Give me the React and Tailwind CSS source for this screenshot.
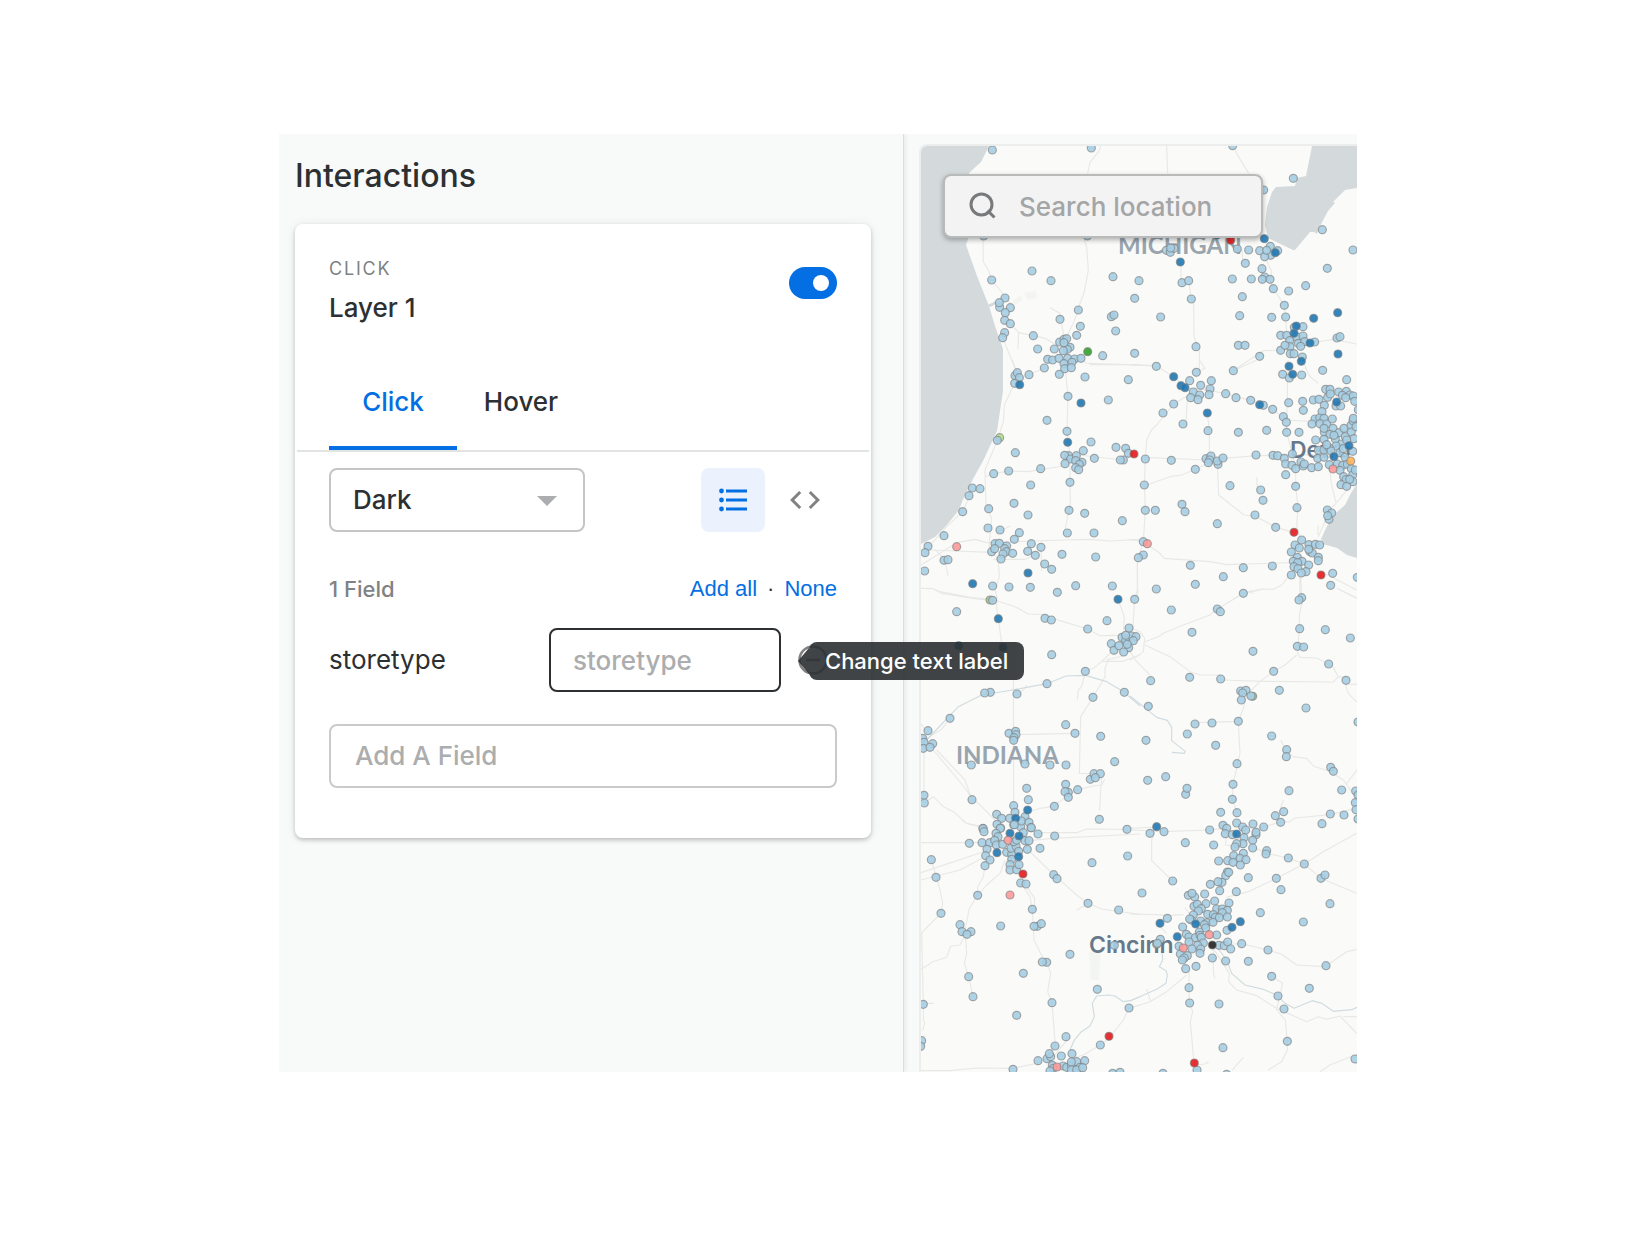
import React from "react";

const WATER = "#d4dadc";

// Store positions per map tile, in thirds of a pixel from the tile's corner.
const TILES = [
  {
    x: -11, y: -16,
    light: [[247,60],[544,54],[221,318],[532,318],[366,423],[423,452],[245,450],[609,440],[687,452],[285,504],[269,532],[268,518],[301,533],[286,548],[284,571],[301,581],[284,608],[278,623],[370,617],[450,568],[505,540],[511,589],[500,616],[604,560],[612,555],[617,603],[674,505],[383,657],[433,657],[449,636],[462,628],[470,626],[480,652],[472,658],[462,638],[460,662],[413,688],[428,690],[447,685],[473,685],[494,687],[513,685],[462,701],[486,697],[403,714],[464,716],[484,713],[578,677],[674,670]],
    green: [[533,665]],
  },
  {
    x: 209, y: -16,
    light: [[308,47],[490,145],[401,180],[577,299],[669,360],[592,415],[109,361],[121,367],[132,355],[122,354],[322,357],[356,360],[389,362],[421,349],[443,362],[422,376],[404,380],[410,361],[346,400],[396,416],[307,447],[364,447],[404,441],[397,448],[420,448],[156,458],[176,452],[430,476],[476,483],[527,467],[184,507],[337,500],[463,526],[329,557],[425,562],[467,561],[92,561],[493,592],[519,590],[452,616],[470,616],[479,632],[500,620],[519,618],[480,650],[505,640],[524,635],[554,636],[452,661],[465,646],[512,649],[481,671],[492,671],[517,681],[621,624],[630,620],[325,646],[345,646],[198,650],[389,679],[79,709]],
    blue: [[261,315],[151,396],[403,326],[436,368],[499,588],[492,610],[540,639],[551,565],[623,548],[624,672],[514,694],[477,709]],
    red: [[302,331]],
  },
  {
    x: -11, y: 214,
    light: [[315,47],[322,38],[328,53],[314,70],[357,44],[448,43],[525,51],[655,59],[474,109],[595,120],[411,181],[471,214],[316,278],[543,246],[618,262],[647,265],[655,280],[640,300],[631,300],[520,272],[476,287],[464,286],[482,297],[499,287],[516,307],[497,302],[508,313],[497,323],[506,329],[465,311],[553,295],[296,333],[251,341],[392,326],[362,375],[480,367],[187,384],[210,386],[177,407],[158,455],[312,430],[236,446],[354,465],[477,451],[524,460],[637,482],[234,504],[270,510],[328,518],[313,538],[102,527],[472,519],[552,519],[54,559],[45,578],[102,601],[114,599],[44,633],[255,551],[268,550],[290,558],[284,566],[245,575],[254,566],[289,575],[279,582],[273,597],[308,580],[364,551],[393,562],[353,574],[376,586],[404,612],[425,628],[456,583],[557,591],[248,678],[297,681],[361,682],[442,697],[497,677],[607,678]],
    lime: [[269,233]],
    over: [[262,241]],
    blue: [[329,74],[513,129],[473,247],[354,639],[188,671]],
    red: [[672,282]],
    pink: [[140,560]],
  },
  {
    x: 209, y: 214,
    light: [[199,37],[310,32],[179,62],[212,76],[244,62],[240,87],[237,104],[190,96],[209,105],[182,113],[204,119],[131,132],[99,159],[159,192],[287,101],[318,113],[362,121],[400,136],[428,148],[460,170],[469,187],[470,217],[507,217],[476,128],[518,124],[520,151],[458,43],[478,54],[515,45],[578,31],[650,59],[234,212],[325,217],[410,211],[46,297],[124,301],[196,328],[228,296],[243,288],[239,300],[235,308],[264,313],[262,303],[279,294],[378,285],[429,286],[443,287],[463,295],[487,282],[467,312],[486,316],[497,326],[513,306],[520,318],[523,312],[545,323],[565,320],[467,344],[497,379],[501,443],[550,120],[567,118],[583,136],[587,88],[600,88],[593,112],[601,102],[626,96],[649,94],[637,106],[660,105],[670,108],[647,113],[674,124],[618,138],[632,138],[576,155],[555,177],[569,174],[582,175],[546,192],[570,191],[590,192],[607,177],[609,205],[583,217],[600,223],[557,240],[582,238],[616,237],[627,218],[642,205],[646,230],[635,252],[663,196],[669,182],[670,175],[664,216],[672,236],[650,240],[668,274],[618,258],[630,278],[582,205],[612,226],[678,200],[565,271],[563,295],[582,292],[582,270],[598,264],[603,273],[590,254],[640,266],[645,292],[598,314],[622,312],[638,316],[630,331],[652,313],[664,326],[668,345],[676,330],[641,350],[648,359],[669,365],[633,374],[650,379],[659,358],[685,149],[592,450],[605,459],[597,478],[593,467],[43,375],[300,377],[392,390],[399,421],[156,433],[165,455],[46,451],[76,451],[375,465],[262,491],[437,502],[40,545],[40,585],[25,593],[181,616],[340,623],[427,618],[280,650],[196,673],[79,687],[608,640],[602,676],[682,652],[515,540],[495,555],[508,564],[484,576],[537,554],[556,553],[569,555],[540,575],[547,579],[536,568],[565,592],[565,602],[502,592],[490,604],[516,604],[503,608],[492,620],[504,626],[536,615],[528,635],[514,639],[484,645],[515,713],[507,720]],
    blue: [[131,50],[153,77],[165,83],[232,159],[389,134],[488,43],[620,126],[657,257],[612,290]],
    orange: [[662,303]],
    pink: [[609,327],[52,551]],
    red: [[492,517],[573,645]],
  },
  {
    x: -11, y: 444,
    light: [[140,65],[405,85],[424,90],[533,117],[591,92],[657,114],[636,142],[647,152],[665,138],[678,140],[670,152],[656,173],[647,136],[604,161],[612,181],[627,167],[641,186],[652,163],[425,194],[526,244],[411,281],[643,307],[549,322],[241,307],[224,309],[321,312],[120,385],[467,404],[495,430],[54,422],[38,445],[42,457],[68,461],[40,475],[60,472],[297,430],[317,424],[318,434],[312,443],[311,451],[572,439],[614,515],[184,525],[345,522],[420,525],[468,525],[350,595],[355,629],[186,629],[311,647],[315,667],[467,583],[475,607],[465,605],[475,622],[503,599],[433,649],[541,568],[552,551],[571,551],[556,563],[42,616],[43,639],[260,673],[275,685],[299,685],[261,703],[272,714],[311,704],[332,710],[345,680],[334,693],[357,697],[363,713],[219,715],[568,688]],
    olive: [[240,30]],
    over: [[248,31]],
    blue: [[624,28],[265,86],[146,167],[279,172],[353,660],[317,685]],
  },
  {
    x: 209, y: 444,
    light: [[14,28],[124,60],[262,57],[271,65],[340,10],[186,127],[369,184],[431,244],[509,116],[502,169],[521,171],[586,119],[661,144],[596,222],[648,271],[62,272],[179,262],[272,267],[332,303],[348,301],[338,309],[334,330],[448,301],[528,354],[55,349],[195,402],[246,399],[325,394],[172,432],[257,466],[425,438],[470,479],[469,500],[48,451],[321,521],[53,571],[107,560],[309,583],[167,613],[171,595],[307,628],[272,667],[321,668],[477,602],[602,532],[610,544],[635,600],[677,603],[684,615],[676,638],[678,659],[642,675],[601,672],[684,687],[436,677],[461,665],[452,697],[576,701],[320,699],[369,702],[401,711],[279,706],[290,715],[338,711],[684,396]],
    olive: [[368,319]],
    over: [[363,318]],
  },
  {
    x: -11, y: 674,
    light: [[219,26],[222,35],[271,25],[258,40],[264,50],[178,70],[216,68],[239,68],[254,61],[259,75],[231,88],[278,73],[227,107],[240,120],[225,137],[290,97],[305,103],[303,85],[318,79],[312,65],[320,60],[340,38],[345,62],[357,62],[352,88],[326,94],[390,85],[384,42],[305,118],[300,134],[300,150],[320,149],[327,134],[313,14],[364,23],[434,48],[651,28],[546,128],[653,108],[64,119],[78,172],[203,226],[93,280],[332,189],[348,192],[431,164],[441,176],[367,268],[534,250],[626,270],[150,314],[156,335],[183,335],[171,343],[272,318],[382,319],[394,311],[372,319],[480,403],[410,427],[397,426],[340,460],[176,470],[189,530],[426,548],[562,508],[613,376],[40,553],[35,662],[32,679],[320,586],[657,564],[468,650],[435,678],[571,675],[384,722],[411,716],[422,710],[418,701],[454,708],[486,701],[427,736],[430,745],[459,738],[470,742],[484,735],[500,725],[524,722],[510,742],[484,726],[484,750],[500,750],[518,743],[420,753],[309,748],[608,760],[630,757]],
    blue: [[300,40],[327,48],[261,98],[326,110]],
    pink: [[294,61],[300,225],[441,741]],
    red: [[339,162],[597,649]],
  },
  {
    x: 209, y: 674,
    light: [[60,40],[102,35],[166,68],[239,30],[251,75],[286,41],[307,44],[347,30],[378,44],[378,37],[342,53],[368,61],[339,71],[320,71],[315,81],[368,84],[340,100],[311,107],[330,115],[348,119],[331,135],[293,122],[309,127],[266,123],[410,92],[408,102],[475,114],[523,132],[573,175],[585,165],[439,175],[453,209],[355,173],[319,215],[292,156],[287,167],[296,157],[276,187],[264,185],[241,193],[269,212],[128,183],[36,219],[175,226],[194,231],[186,220],[224,222],[254,243],[228,251],[297,249],[192,259],[202,253],[214,266],[205,273],[260,267],[277,267],[292,271],[277,278],[233,283],[250,284],[256,292],[268,293],[292,291],[190,285],[184,300],[179,297],[212,303],[231,308],[249,307],[223,314],[227,324],[208,336],[291,331],[260,345],[158,321],[169,343],[177,351],[196,353],[210,346],[214,352],[220,369],[203,376],[177,366],[212,387],[186,387],[147,379],[210,400],[151,402],[172,407],[163,414],[157,420],[167,446],[198,439],[247,414],[287,423],[267,376],[283,377],[293,366],[302,387],[335,371],[391,278],[520,306],[600,251],[414,390],[355,424],[588,437],[425,469],[538,505],[444,528],[462,567],[177,503],[179,549],[267,552],[472,664],[279,683],[201,750],[675,717],[112,295],[91,358],[99,760],[290,763]],
    olive: [[80,373]],
    over: [[82,370]],
    blue: [[80,20],[320,42],[90,310],[142,350],[197,312],[306,322],[331,305]],
    pink: [[238,344],[160,384]],
    red: [[193,729]],
    black: [[247,375]],
  },
];

const KINDS = [
  ["light", "#a6cee3"],
  ["olive", "#a9c08a"],
  ["lime", "#b2df8a"],
  ["green", "#33a02c"],
  ["over", "#a6cee3"],
  ["blue", "#1f78b4"],
  ["orange", "#fdb45c"],
  ["pink", "#fb9a99"],
  ["red", "#e31a1c"],
  ["black", "#222222"],
];

const ROADS = [
  [-11, -16, "M572 48L568 62L540 97L533 130M219 320L220 395L236 422L245 450L270 480L300 520M522 330L530 350L535 420L522 490L510 520L505 540L490 580L460 640M301 581L326 608L324 657M326 608L370 617L405 625L440 645M278 623L320 727M533 700L690 705M420 533L450 550L465 640M513 685L530 700"],
  [209, -16, "M110 48L113 130M315 62L356 130M336 360L338 392M153 396L153 450M176 452L184 507L191 520L192 620L208 660L208 720M404 380L425 425L420 450L430 476L463 526L470 600M540 639L610 628L680 642M320 715L400 662L480 660M517 681L530 720M0 704L60 706L79 709"],
  [-11, 214, "M321 38L307 0M314 70L283 135L280 185L262 241L225 330L228 440L245 475L237 560L265 600L268 650L255 690L262 716M466 30L474 109L471 214L480 290L480 367L481 430L465 510M225 350L251 341L296 333L355 335L460 318M506 285L640 300M33 615L90 580L140 548L195 538L230 548L460 540L540 538L600 543L690 538M60 570L245 577M250 598L345 598L376 586M65 550L110 500L158 455L180 405M75 568L105 600L114 647M300 498L265 515M393 562L395 632M33 685L70 686L90 695L180 712L250 719M682 593L683 716M540 14L690 14M403 24L357 44L322 55"],
  [209, 214, "M0 15L79 18L131 50L165 83L240 92L287 101L362 121L428 148L470 180L555 185M199 37L225 25L208 0M190 96L131 132L80 195L66 208L50 240L46 297L43 375L46 451L40 545L22 600L22 690L14 720M232 159L238 212L238 290L262 310L266 405L342 465L380 470L437 502L492 517M46 292L228 300L378 287L550 284M50 375L120 350L155 345L196 328L240 308M474 0L470 217L497 320L497 379L504 443L500 500L515 545M172 112L168 192M310 32L380 0M598 320L605 375L617 425M660 380L600 450L565 530M380 352L382 385M565 495L563 525M0 538L40 545L90 580L103 595L240 605L290 614L480 608M565 630L680 690M475 650L455 675L430 688L395 687L340 699L310 718M512 645L515 716M509 645L510 716M525 20L540 50L565 70M620 685L682 715"],
  [-11, 444, "M75 0L95 10L200 27L260 32L315 50L355 72L405 74L450 92L533 117L570 137L630 136M257 30L265 86L275 160L310 230L311 640M350 285L340 300L321 312M33 400L45 420M50 445L95 418L120 385M318 434L495 430M624 28L643 80L640 120M607 183L575 215L550 235L526 244L515 290L505 300L502 328M650 195L590 210M597 205L585 235L585 260L549 322L512 380L508 550L540 551M575 560L572 600L569 662M42 480L42 640L70 620L100 650L130 665L170 700L219 715M70 480L170 600L186 629M80 480L165 570L186 629M433 649L390 655L350 668M433 649L467 620L503 599L550 588L575 585L584 568M180 617L215 650L255 690M575 214L640 214L690 195"],
  [209, 444, "M45 155L85 140L100 130L160 105L240 75L262 57L340 10L390 0M0 115L30 125L44 145L40 185L20 200L0 210M45 165L120 200L180 245L210 255L272 255M0 185L20 215L62 257M272 270L400 274L610 276L625 260L648 262L648 290L655 310L681 337M518 30L509 70L505 165L503 190L510 202L560 204L596 222L610 232L625 262M500 195L465 225L431 244L390 275L350 315L340 355L325 394L330 490L309 583L307 628L321 668M195 398L325 394M14 28L8 120M650 282L681 283M453 450L465 480L490 500L530 505L550 528L602 545L640 570L665 605M681 540L650 580M460 630L450 660L445 680M380 715L452 697L480 695L495 684L601 674L665 658M0 715L80 711M360 0L370 12M630 0L680 25"],
  [-11, 674, "M33 68L220 68M33 158L230 92M33 180L150 150L225 110M225 137L220 170L203 200L203 226L178 265L165 330L170 400L163 430L176 470L189 530M285 120L270 160L230 195L203 226M64 119L90 210L98 250L93 280L33 340M165 345L150 375L122 378L110 412L65 427L55 435L33 447M357 62L430 55L690 42M384 38L500 38L530 27L651 28M355 90L431 164L500 225L534 250L575 267L690 283M500 271L534 250M340 185L374 235L372 270M332 189L360 230L367 268L372 360L397 410L412 430L422 460L413 515L426 548L436 678L420 700M35 340L40 550L40 600L44 610L38 632M40 550L72 550M33 752L120 752L200 744L309 745L390 728M657 564L640 600L597 655L571 675L520 705L486 715M430 710L480 650M690 555L657 564M155 0L170 10L210 18M556 12L568 0"],
  [209, 674, "M0 30L60 32L102 35L230 30L290 25M80 20L65 60L65 122L128 183M290 40L286 75L310 78M375 84L408 100L475 114L523 132L573 175L680 220M523 132L580 95L680 40M523 132L439 175L355 215L290 232M0 282L80 284L112 287L160 284M165 262L190 300M260 375L335 371L414 390L455 403L500 435L580 440L600 430L650 395L680 388M250 380L250 455L254 475M247 380L298 460L296 485L320 510L380 527L440 565L530 605L565 590L590 598L630 588L680 640M425 469L458 490L440 570L466 600L472 664L472 690L455 725L415 750M177 450L178 549L188 575L181 605L192 729L205 755M170 465L110 515L60 545L0 565M340 712L305 752M50 507L62 545M193 735L225 732L236 725M570 755L600 735L675 705M640 590L680 590M90 320L110 340"],
];

const RIVERS = [
  [-11, 444, "M50 450L145 350L215 315L290 303L411 281L468 258L526 256L590 275L643 307L690 348"],
  [209, 444, "M0 318L55 362L80 382L112 391L125 412L125 452L166 484L163 490L126 487"],
  [-11, 674, "M480 690L492 662L512 637L540 618L553 590L547 550L560 528L595 525L615 528L640 545L660 542L690 530"],
  [209, 674, "M0 543L80 508L108 490L112 465L108 452L88 440L98 420L96 390M260 380L290 420L305 460L345 495L400 508L440 525L465 550L492 565L547 542L575 550L610 574L665 569L681 562"],
];

function Lines({ sets, stroke }) {
  return sets.map(([x, y, d]) => (
    <path key={d} d={d} transform={`translate(${x} ${y}) scale(.33333)`} fill="none" stroke={stroke} strokeWidth="3.4" strokeLinejoin="round" />
  ));
}

function StoreMap() {
  return (
    <svg viewBox="0 0 436 926" preserveAspectRatio="xMinYMin slice" className="block h-full w-full" role="img" aria-label="Store locations map">
      <rect width="2000" height="2000" fill="#fafaf8" />
      <g fill={WATER}>
        <path d="M0 0H68L60 16L48 27V90L45 99L56 130L68 160L74 180L82 203L82 245L79 265L76 285L62 315L52 333L43 351L38 364L25 380L14 391L0 398Z" />
        <path d="M391 0H436V42L424 44L412 56L406 52L414 57L407 65L399 80L396 88L393 86L389 86L374 104L372 104L347 92L344 79L346 61L351 46L355 41L374 40L376 32L385 30L386 25Z" />
        <path d="M436 338V412L426 409L416 402L402 398L400 393L406 380L416 366L424 359L430 347Z" />
      </g>
      <g fill="#f3f5f3">
        <path d="M103 147L115 145L116 152L107 154ZM92 154L100 150L102 154L93 159Z" />
        <path d="M168 806L180 804L178 834L170 834Z" />
      </g>
      <path d="M68 160L76 156" stroke={WATER} strokeWidth="3" />
      <Lines sets={ROADS} stroke="#e8e8e7" />
      <Lines sets={RIVERS} stroke="#d0dce1" />
      <g fontSize="24" fontWeight="700" fontFamily="Lato, sans-serif" fill="#99a5ae">
        <text x="197" y="108">MICHIGAN</text>
        <text x="35" y="618">INDIANA</text>
      </g>
      <g fontSize="23" fontWeight="600" fontFamily="Inter, sans-serif" fill="#66788a">
        <text x="369" y="312">Detro</text>
        <text x="168" y="807">Cincinn</text>
      </g>
      {TILES.map((tile) => (
        <g key={`${tile.x},${tile.y}`} transform={`translate(${tile.x} ${tile.y}) scale(.33333)`} stroke="#808080" strokeOpacity=".65" strokeWidth="3.6" fillOpacity=".9">
          {KINDS.map(([kind, fill]) =>
            (tile[kind] || []).map(([cx, cy]) => <circle key={`${kind}${cx},${cy}`} cx={cx} cy={cy} r="12" fill={fill} />)
          )}
        </g>
      ))}
    </svg>
  );
}

export default function App() {
  return (
    <div className="min-h-screen bg-white pt-[134px] pr-[283px] pb-[176px] pl-[279px] font-['Inter',sans-serif] text-[#2c3032]">
      <div className="flex min-h-[938px] overflow-hidden bg-[#f8faf9]">
        <aside className="relative z-10 w-[625px] shrink-0 border-r border-[#dcdedd] pr-8 pl-4 shadow-[2px_0_4px_rgba(0,0,0,0.06)]">
          <h1 className="pt-[22px] pb-[18px] text-[32px] leading-10 font-medium">Interactions</h1>

          <section className="mt-2.5 rounded-lg bg-white px-0.5 pb-[50px] shadow-[0_2px_4px_rgba(0,0,0,0.22),0_0_12px_rgba(0,0,0,0.06)]">
            <header className="flex items-start justify-between px-8 pt-8">
              <div>
                <p className="text-lg leading-[26px] tracking-widest text-[#808284]">CLICK</p>
                <h2 className="mt-1.5 text-[26px] leading-10 font-medium">Layer 1</h2>
              </div>
              <label className="mt-[11px] block h-8 w-12">
                <input
                  type="checkbox"
                  defaultChecked
                  aria-label="Enable click interaction"
                  className="block h-8 w-12 appearance-none rounded-full bg-[#bbbbbb] p-2 before:block before:size-4 before:rounded-full before:bg-white checked:bg-[#036fe2] checked:before:ml-4"
                />
              </label>
            </header>

            <div role="tablist" className="mt-[26px] flex border-b-2 border-[#e2e3e3] px-8 text-[26px] leading-10 font-medium">
              <button role="tab" aria-selected="true" className="h-24 w-32 border-b-4 border-[#036fe2] pt-1 text-[#036fe2]">Click</button>
              <button role="tab" aria-selected="false" className="h-24 w-32 border-b-4 border-transparent pt-1">Hover</button>
            </div>

            <div className="px-8 pt-4">
              <div className="flex items-center">
                <div className="relative w-64">
                  <select aria-label="Popup style" className="h-16 w-full appearance-none rounded-lg border-2 border-[#c4c5c6] bg-white pb-0.5 pl-[22px] text-[26px] font-medium">
                    <option>Dark</option>
                  </select>
                  <svg viewBox="0 0 20 10" className="pointer-events-none absolute top-7 right-7 h-2.5 w-5" fill="#abadae">
                    <path d="M0 0H20L10 10Z" />
                  </svg>
                </div>
                <button aria-label="List view" className="ml-auto flex size-16 items-center justify-center rounded-lg bg-[#ebf2fe]">
                  <svg viewBox="0 0 32 32" className="size-8" fill="#036fe2">
                    <circle cx="4.5" cy="7" r="2.4" />
                    <circle cx="4.5" cy="16" r="2.4" />
                    <circle cx="4.5" cy="25" r="2.4" />
                    <path d="M9 5.5H30V8.5H9ZM9 14.5H30V17.5H9ZM9 23.5H30V26.5H9Z" />
                  </svg>
                </button>
                <button aria-label="Code view" className="ml-2 flex size-16 items-center justify-center">
                  <svg viewBox="0 0 32 32" className="size-8" fill="none" stroke="#808284" strokeWidth="3">
                    <path d="M11.2 8L3.2 16L11.2 24M20.8 8L28.8 16L20.8 24" />
                  </svg>
                </button>
              </div>

              <div className="mt-[41px] flex items-center text-[22px] leading-8">
                <span className="font-medium text-[#808284]">1 Field</span>
                <div className="ml-auto flex gap-2.5 font-['Liberation_Sans',sans-serif]">
                  <button className="text-[#036fe2]">Add all</button>
                  <span>·</span>
                  <button className="text-[#036fe2]">None</button>
                </div>
              </div>

              <div className="mt-[23px] flex items-center text-[26px]">
                <label htmlFor="field-label" className="w-[220px] leading-8">storetype</label>
                <input id="field-label" placeholder="storetype" className="h-16 w-[232px] rounded-lg border-2 border-[#2c3032] bg-white px-[22px] font-medium outline-none placeholder:text-[#abadae]" />
                <div className="relative ml-auto flex h-16 w-12 items-center">
                  <button aria-label="Remove field" className="ml-2">
                    <svg viewBox="0 0 32 32" className="size-8" fill="none" stroke="#808284" strokeWidth="2.6">
                      <circle cx="16" cy="16" r="13.5" />
                      <path d="M9 16H23" />
                    </svg>
                  </button>
                  <div role="tooltip" className="absolute top-3.5 left-[9px] flex items-center opacity-90">
                    <svg viewBox="0 0 11 34" className="h-[34px] w-[11px]" fill="#2c3032">
                      <path d="M11 4V30L0 17Z" />
                    </svg>
                    <span className="rounded-lg bg-[#2c3032] px-4 text-[22px] leading-[38px] font-medium whitespace-nowrap text-white">Change text label</span>
                  </div>
                </div>
              </div>

              <input aria-label="Add a field" placeholder="Add A Field" className="mt-8 h-16 w-full rounded-lg border-2 border-[#c9caca] bg-white px-6 pb-0.5 text-[26px] font-medium outline-none placeholder:text-[#abadae]" />
            </div>
          </section>
        </aside>

        <main className="min-w-0 flex-1 pt-2.5 pl-[15px]">
          <div className="relative h-[928px] overflow-hidden rounded-tl-lg border-t-2 border-l-2 border-[#ebeeed]">
            <StoreMap />
            <label className="absolute top-7 left-[22px] flex h-16 w-80 items-center rounded-lg border-2 border-[#b9bbbb] bg-[#f3f3f3] pl-[22px] shadow-[0_2px_5px_rgba(0,0,0,0.3)]">
              <svg viewBox="0 0 32 32" className="size-8 shrink-0" fill="none" stroke="#77797b" strokeWidth="3">
                <circle cx="14.5" cy="14.5" r="10.5" />
                <path d="M20.5 20.5L27.5 27.5" />
              </svg>
              <input aria-label="Search location" placeholder="Search location" className="ml-5 w-full min-w-0 bg-transparent text-[26px] font-medium outline-none placeholder:text-[#a3a5a6]" />
            </label>
          </div>
        </main>
      </div>
    </div>
  );
}
